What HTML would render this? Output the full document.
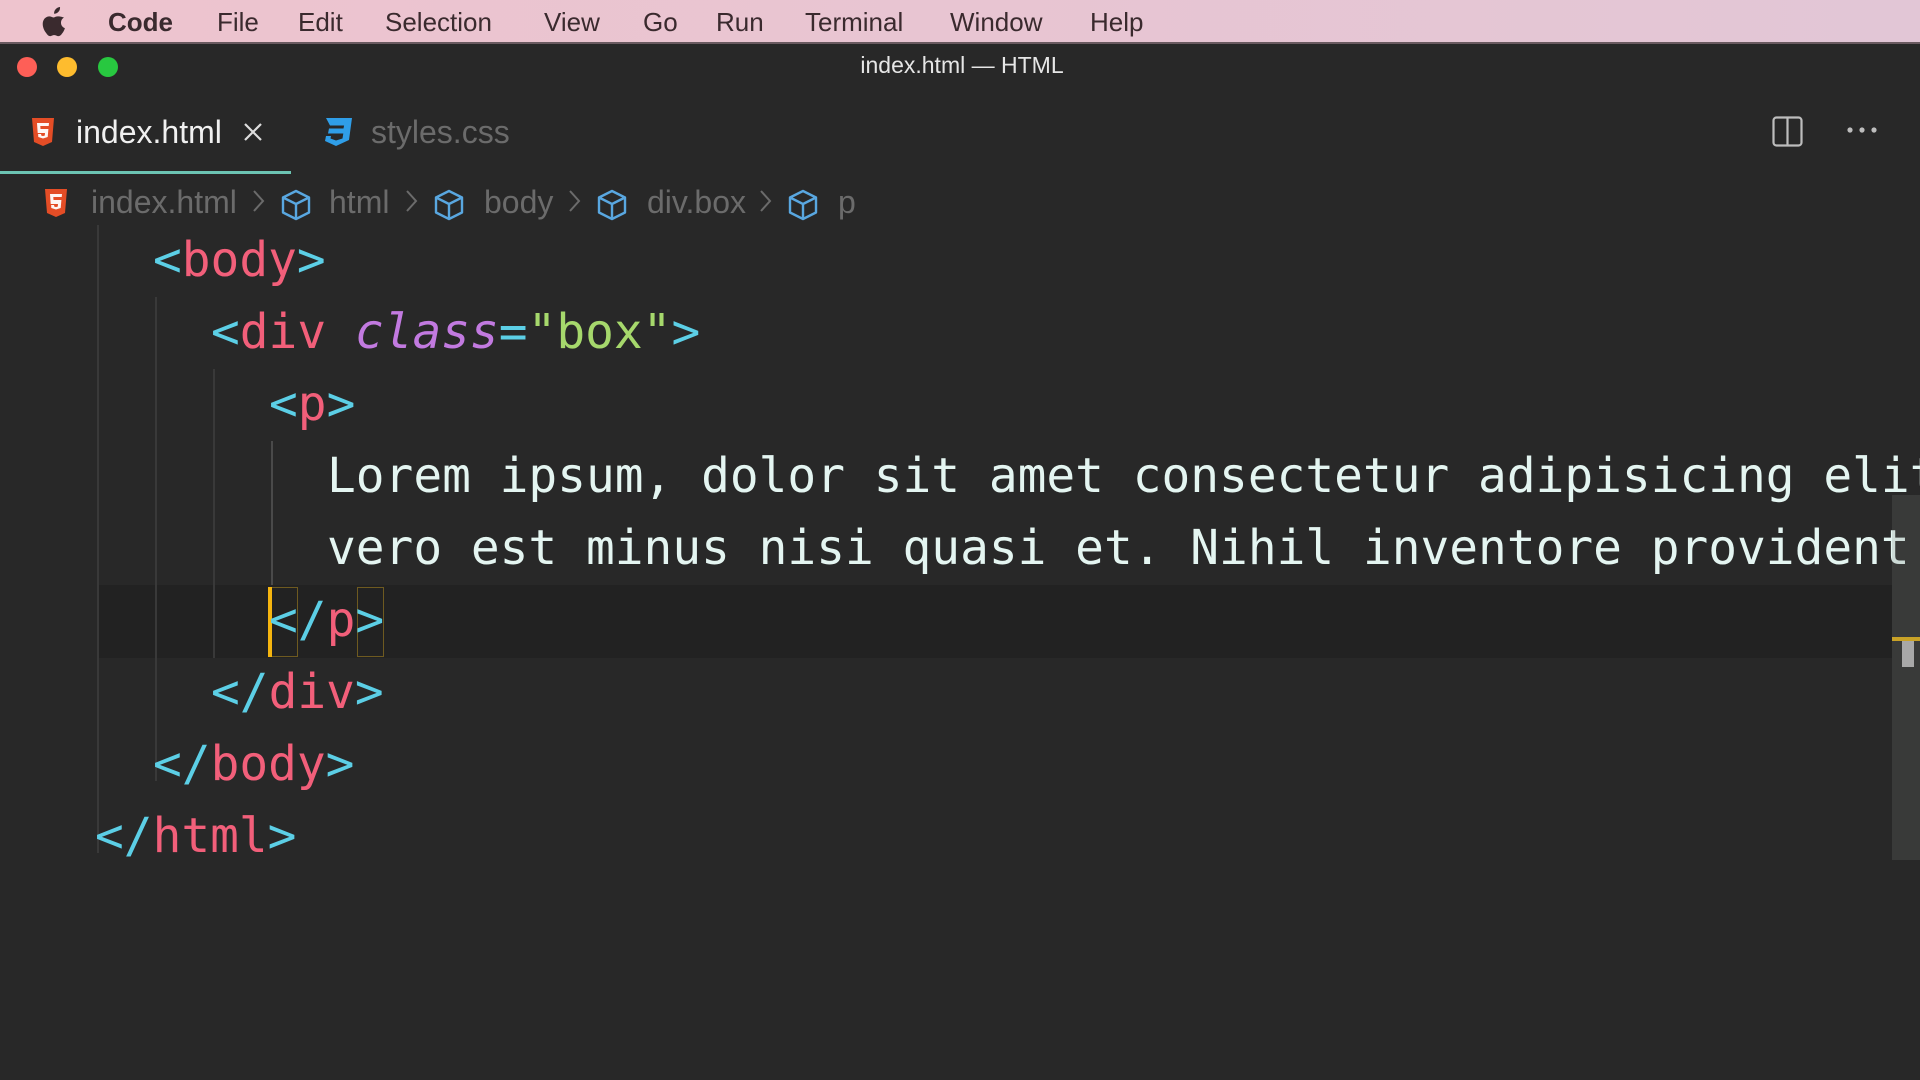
<!DOCTYPE html>
<html><head><meta charset="utf-8"><style>
*{margin:0;padding:0;box-sizing:border-box}
body{width:1920px;height:1080px;overflow:hidden;background:#282828;font-family:"Liberation Sans",sans-serif;position:relative}
.menu{position:absolute;left:0;top:0;width:1920px;height:44px;background:linear-gradient(90deg,#eec4ce,#e2c6d6);border-bottom:2px solid #6a5a60}
.menu span{position:absolute;top:7px;font-size:26px;color:#3a2a2e}
.win{position:absolute;left:0;top:46px;width:1920px;height:1034px;background:#282828;overflow:hidden}
.dot{position:absolute;width:20px;height:20px;border-radius:50%;top:11px}
.title{position:absolute;top:6px;left:0;width:1924px;text-align:center;color:#e6e6e6;font-size:23px}
.tab{position:absolute;font-size:32px;top:68px}
.bc{position:absolute;top:138px;font-size:32px;color:#6b6b6b}
.code{position:absolute;font-family:"DejaVu Sans Mono",monospace;font-size:47.8px;line-height:72px;white-space:pre;color:#e4f5f1}
.b{color:#5ccfe6}.t{color:#f25f7a}.a{color:#c27ae0;font-style:italic}.s{color:#a6d86c}
.g{position:absolute;width:2px;background:#393939}
.chev{position:absolute;top:192px}
</style></head><body>
<div class="menu">
<svg style="position:absolute;left:42px;top:7px" width="26" height="30" viewBox="0 0 26 30"><path d="M18 0c.3 2.3-.7 4.5-2.6 5.8-1 .7-2.300 1-3.3.9-.2-2.2.9-4.3 2.6-5.5C15.7.5 17 .1 18 0zM22 10.5c-2.2 1.4-3 3.3-3 5.3 0 2.6 1.6 4.6 3.9 5.4-.6 1.8-1.4 3.5-2.600 5-1.1 1.5-2.2 2.9-3.9 2.9-1.7 0-2.2-1-4.2-1s-2.5 1-4.1 1c-1.6.1-2.9-1.6-4-3.1C1.4 22.7-.6 16.9 1.8 12.8c1.1-2 3.2-3.3 5.4-3.4 1.7 0 3.2 1.1 4.2 1.100s2.9-1.3 4.900-1.1c.8 0 3.2.3 5.7 1.1z" fill="#3a2a2e"/></svg>
<span style="left:108px;font-weight:bold">Code</span>
<span style="left:217px">File</span><span style="left:298px">Edit</span><span style="left:385px">Selection</span><span style="left:544px">View</span><span style="left:643px">Go</span><span style="left:716px">Run</span><span style="left:805px">Terminal</span><span style="left:950px">Window</span><span style="left:1090px">Help</span>
</div>
<div class="win">
<div class="dot" style="left:17px;background:#fe5f57"></div>
<div class="dot" style="left:57px;background:#febc2e"></div>
<div class="dot" style="left:98px;background:#28c840"></div>
<div class="title">index.html — HTML</div>
<div style="position:absolute;left:0;top:125px;width:291px;height:3px;background:#6cc4b3"></div>
<svg style="position:absolute;left:31px;top:72px" width="24" height="28" viewBox="0 0 24 28"><path d="M1 0h22l-2 24-9 4-9-4z" fill="#e44d26"/><path d="M6 5h12l-.3 3H9.3l.2 3h7.9l-.7 8-4.7 1.5L7.3 19l-.2-3h3l.1 1.5 1.8.6 1.8-.6.2-2.5H6.7z" fill="#fff" opacity=".95"/></svg>
<div class="tab" style="left:76px;color:#f0f0f0">index.html</div>
<svg style="position:absolute;left:243px;top:76px" width="20" height="20" fill="none" stroke="#ddd" stroke-width="2.2"><path d="M2 2l16 16M18 2L2 18"/></svg>
<svg style="position:absolute;left:322px;top:72px" width="30" height="28" viewBox="0 0 30 28"><path d="M4 0h26l-3 22-13 6-11-5 1-5h5l-.5 2.5 5.5 2 6.5-2 .8-5H6l1-5h14.5l.6-3H8z" fill="#2f9ee8"/></svg>
<div class="tab" style="left:371px;color:#6b6b6b">styles.css</div>
<svg style="position:absolute;left:1772px;top:70px" width="31" height="31" viewBox="0 0 31 31" fill="none" stroke="#bdbdbd" stroke-width="2.2"><rect x="1.5" y="1.5" width="28" height="28" rx="3"/><path d="M15.5 1.5v28"/></svg>
<svg style="position:absolute;left:1846px;top:80px" width="32" height="8"><circle cx="4" cy="4" r="2.6" fill="#bdbdbd"/><circle cx="16" cy="4" r="2.6" fill="#bdbdbd"/><circle cx="28" cy="4" r="2.6" fill="#bdbdbd"/></svg>
<svg style="position:absolute;left:44px;top:143px" width="24" height="28" viewBox="0 0 24 28"><path d="M1 0h22l-2 24-9 4-9-4z" fill="#e44d26"/><path d="M6 5h12l-.3 3H9.3l.2 3h7.9l-.7 8-4.7 1.5L7.3 19l-.2-3h3l.1 1.5 1.8.6 1.8-.6.2-2.5H6.7z" fill="#fff" opacity=".95"/></svg>
<div class="bc" style="left:91px">index.html</div>
<div class="bc" style="left:329px">html</div>
<div class="bc" style="left:484px">body</div>
<div class="bc" style="left:647px">div.box</div>
<div class="bc" style="left:838px">p</div>
<svg width="0" height="0" style="position:absolute"><defs><g id="cube" fill="none" stroke="#59a7e0" stroke-width="2.4" stroke-linejoin="round"><path d="M16 2L29 8.5v15L16 30 3 23.5v-15z"/><path d="M3 8.5l13 6.5 13-6.5M16 15v15"/></g><path id="ch" d="M2 2l9 10-9 10" fill="none" stroke="#6b6b6b" stroke-width="2"/></defs></svg>
<svg style="position:absolute;left:252px;top:143px" width="14" height="24"><use href="#ch"/></svg>
<svg style="position:absolute;left:405px;top:143px" width="14" height="24"><use href="#ch"/></svg>
<svg style="position:absolute;left:568px;top:143px" width="14" height="24"><use href="#ch"/></svg>
<svg style="position:absolute;left:759px;top:143px" width="14" height="24"><use href="#ch"/></svg>
<svg style="position:absolute;left:280px;top:143px" width="32" height="32"><use href="#cube"/></svg>
<svg style="position:absolute;left:433px;top:143px" width="32" height="32"><use href="#cube"/></svg>
<svg style="position:absolute;left:596px;top:143px" width="32" height="32"><use href="#cube"/></svg>
<svg style="position:absolute;left:787px;top:143px" width="32" height="32"><use href="#cube"/></svg>
</div>
<div style="position:absolute;left:0;top:225px;width:1920px;height:855px;overflow:hidden">
<div style="position:absolute;left:98px;top:360px;width:1794px;height:73px;background:#222"></div>
<div class="g" style="left:97px;top:0;height:628px"></div>
<div class="g" style="left:155px;top:72px;height:484px"></div>
<div class="g" style="left:213px;top:144px;height:289px"></div>
<div class="g" style="left:271px;top:216px;height:144px;background:#4a4a4a"></div>
<div class="code" style="left:153px;top:0"><span class="b">&lt;</span><span class="t">body</span><span class="b">&gt;</span></div>
<div class="code" style="left:211px;top:72px"><span class="b">&lt;</span><span class="t">div</span> <span class="a">class</span><span class="b">=</span><span class="s">"box"</span><span class="b">&gt;</span></div>
<div class="code" style="left:269px;top:144px"><span class="b">&lt;</span><span class="t">p</span><span class="b">&gt;</span></div>
<div class="code" style="left:327px;top:216px">Lorem ipsum, dolor sit amet consectetur adipisicing elit. Quos</div>
<div class="code" style="left:327px;top:288px">vero est minus nisi quasi et. Nihil inventore provident quo</div>
<div style="position:absolute;left:271px;top:362px;width:27px;height:70px;border:1.5px solid #6e5a20"></div>
<div style="position:absolute;left:357px;top:362px;width:27px;height:70px;border:1.5px solid #6e5a20"></div>
<div style="position:absolute;left:268px;top:362px;width:4px;height:70px;background:#f5b50f"></div>
<div class="code" style="left:269px;top:360px"><span class="b">&lt;/</span><span class="t">p</span><span class="b">&gt;</span></div>
<div class="code" style="left:211px;top:432px"><span class="b">&lt;/</span><span class="t">div</span><span class="b">&gt;</span></div>
<div class="code" style="left:153px;top:504px"><span class="b">&lt;/</span><span class="t">body</span><span class="b">&gt;</span></div>
<div class="code" style="left:95px;top:576px"><span class="b">&lt;/</span><span class="t">html</span><span class="b">&gt;</span></div>
<div style="position:absolute;left:1892px;top:270px;width:28px;height:365px;background:rgba(120,122,118,0.22)"></div>
<div style="position:absolute;left:1892px;top:412px;width:28px;height:4px;background:#c9a227"></div>
<div style="position:absolute;left:1902px;top:416px;width:12px;height:26px;background:#a8a8a8"></div>
</div>
</body></html>
